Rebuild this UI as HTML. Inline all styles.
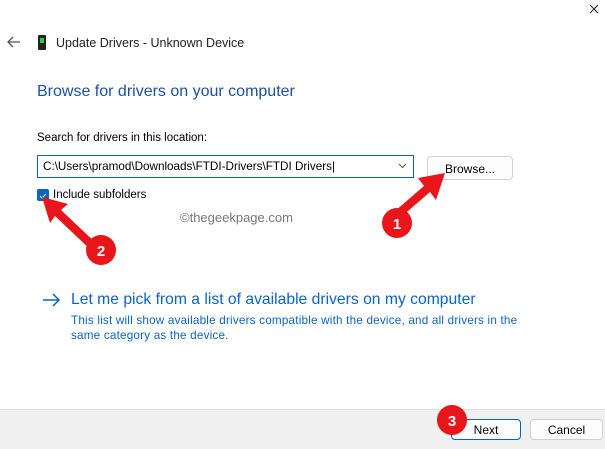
<!DOCTYPE html>
<html><head><style>
body{margin:0;width:605px;height:448px;background:#fff;font-family:"Liberation Sans",sans-serif;position:relative;overflow:hidden;color:#000}
.a{position:absolute;white-space:nowrap}
.btn{position:absolute;background:#fdfdfd;border:1px solid #d0d0d0;border-radius:4px;font-size:12px;text-align:center;box-sizing:border-box}
</style></head><body>
<svg class="a" style="left:589px;top:4px" width="10" height="10"><path d="M1 1l8 8M9 1l-8 8" stroke="#222" stroke-width="1"/></svg>
<svg class="a" style="left:6px;top:35px" width="16" height="14"><path d="M14 7H2M7 2L2 7l5 5" stroke="#555" stroke-width="1.3" fill="none"/></svg>
<div class="a" style="left:38px;top:35px;width:8px;height:15px;background:#222;border-radius:1px"><div style="margin:3px 2px;width:4px;height:5px;background:#2ecc40"></div></div>
<div class="a" style="left:56px;top:36px;font-size:12.5px;color:#222">Update Drivers - Unknown Device</div>
<div class="a" style="left:37px;top:83px;font-size:16px;color:#1c4fa8">Browse for drivers on your computer</div>
<div class="a" style="left:37px;top:132px;font-size:11.5px">Search for drivers in this location:</div>
<div class="a" style="left:37px;top:155px;width:377px;height:23px;border:1px solid #0067c0;box-sizing:border-box;font-size:11.7px;padding:4px 0 0 5px">C:\Users\pramod\Downloads\FTDI-Drivers\FTDI Drivers|<svg style="position:absolute;right:6px;top:7px" width="9" height="6"><path d="M1 1l3.5 3.5L8 1" stroke="#555" fill="none"/></svg></div>
<div class="btn" style="left:427px;top:156px;width:86px;height:24px;padding-top:5px">Browse...</div>
<div class="a" style="left:37px;top:189px;width:12px;height:12px;background:#0067c0;border-radius:2px"><svg width="12" height="12"><path d="M3 6l2 2 4-4" stroke="#fff" fill="none"/></svg></div>
<div class="a" style="left:53px;top:189px;font-size:11.5px">Include subfolders</div>
<div class="a" style="left:180px;top:210px;font-size:13px;color:#777">©thegeekpage.com</div>
<svg class="a" style="left:42px;top:292px" width="20" height="16"><path d="M1 8h16M11 2l6 6-6 6" stroke="#0a64c8" stroke-width="1.5" fill="none"/></svg>
<div class="a" style="left:71px;top:291px;font-size:15.7px;color:#0a64c8">Let me pick from a list of available drivers on my computer</div>
<div class="a" style="left:71px;top:313px;font-size:11.7px;color:#0a64c8;line-height:15px;letter-spacing:0.2px">This list will show available drivers compatible with the device, and all drivers in the<br>same category as the device.</div>
<div class="a" style="left:0;top:409px;width:605px;height:39px;background:#f0f0f0;border-top:1px solid #e0e0e0"></div>
<div class="btn" style="left:451px;top:419px;width:70px;height:21px;padding-top:3px;border-color:#0067c0">Next</div>
<div class="btn" style="left:530px;top:419px;width:73px;height:21px;padding-top:3px">Cancel</div>
<svg class="a" style="left:0;top:0" width="605" height="448">
<path d="M445 173 L436 200 L430 192 L401 217 L395 211 L424 186 L418 178 Z" fill="#e8151b"/>
<path d="M42 197 L68 204 L61 210 L99 246 L93 252 L55 216 L50 223 Z" fill="#e8151b"/>
<circle cx="397" cy="223" r="15" fill="#e8151b"/>
<circle cx="101" cy="250" r="15" fill="#e8151b"/>
<circle cx="452" cy="420" r="15" fill="#e8151b"/>
<text x="397" y="229" font-size="15" fill="#fff" text-anchor="middle" font-family="Liberation Sans" font-weight="bold">1</text>
<text x="101" y="256" font-size="15" fill="#fff" text-anchor="middle" font-family="Liberation Sans" font-weight="bold">2</text>
<text x="452" y="426" font-size="15" fill="#fff" text-anchor="middle" font-family="Liberation Sans" font-weight="bold">3</text>
</svg>
</body></html>
